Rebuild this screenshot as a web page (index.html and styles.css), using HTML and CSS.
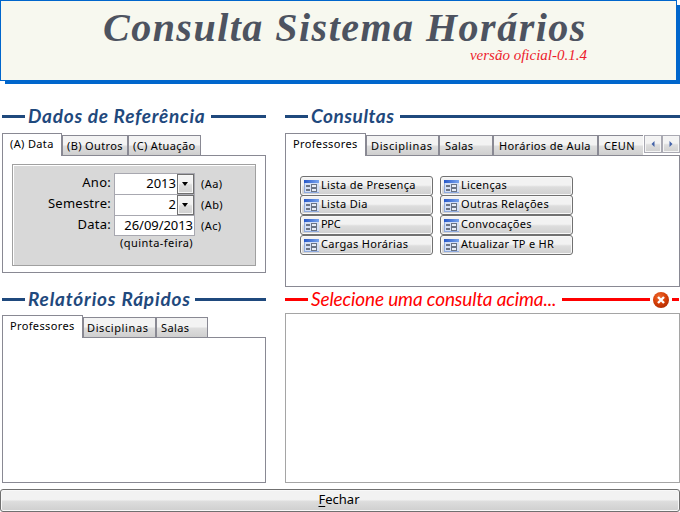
FILE: index.html
```html
<!DOCTYPE html>
<html lang="pt-BR">
<head>
<meta charset="utf-8">
<title>Consulta Sistema Horários</title>
<link rel="stylesheet" href="styles.css">
</head>
<body>
<svg width="0" height="0" class="defs" aria-hidden="true">
  <defs>
    <linearGradient id="bar" x1="0" x2="1"><stop offset="0" stop-color="#2858c8"/><stop offset="1" stop-color="#78a4ee"/></linearGradient>
    <radialGradient id="ball" cx=".4" cy=".3" r=".8"><stop offset="0" stop-color="#ee6a30"/><stop offset=".5" stop-color="#d84008"/><stop offset="1" stop-color="#a82800"/></radialGradient>
    <symbol id="form" viewBox="0 0 15 13">
      <path fill="#d3dff5" d="M0 0h15v13H0z"/>
      <path fill="url(#bar)" d="M0 0h15v3H0z"/>
      <path fill="#8fabdf" d="M0 3h1v10H0zM1 12h14v1H1z"/>
      <path fill="#6b7484" d="M2 5h4v2H2zM2 9h4v2H2zM7 4h6v4H7zM7 8h6v4H7z"/>
      <path fill="#e8edf6" d="M8 5h4v2H8zM8 9h4v2H8z"/>
    </symbol>
  </defs>
</svg>
<header class="banner">
  <div class="banner-box">
    <h1>Consulta Sistema Horários</h1>
    <p>versão oficial-0.1.4</p>
  </div>
</header>
<main>
  <section class="reference">
    <h2 class="rule"><span class="t-dados">Dados de Referência</span></h2>
    <nav class="tabs">
      <span class="tab active w60">(A) Data</span><span class="tab w66">(B) Outros</span><span class="tab w73">(C) Atuação</span>
    </nav>
    <div class="page">
      <form class="bevel">
        <label>Ano:</label><div class="field">2013<i></i></div><small>(Aa)</small>
        <label>Semestre:</label><div class="field">2<i></i></div><small>(Ab)</small>
        <label>Data:</label><div class="field date">26/09/2013</div><small>(Ac)</small>
        <small class="weekday">(quinta-feira)</small>
      </form>
    </div>
  </section>
  <section class="queries">
    <h2 class="rule"><span class="t-cons">Consultas</span></h2>
    <nav class="tabs">
      <span class="tab active w81">Professores</span><span class="tab w73">Disciplinas</span><span class="tab w54">Salas</span><span class="tab w105">Horários de Aula</span><span class="tab w45">CEUN</span>
      <span class="spin"><b><svg viewBox="0 0 4 6"><path d="M3.5 0v6L.5 3z"/></svg></b><b><svg viewBox="0 0 4 6"><path d="M.5 0v6l3-3z"/></svg></b></span>
    </nav>
    <div class="page buttons">
      <button><svg><use href="#form"/></svg><span>Lista de Presença</span></button>
      <button><svg><use href="#form"/></svg><span>Licenças</span></button>
      <button><svg><use href="#form"/></svg><span>Lista Dia</span></button>
      <button><svg><use href="#form"/></svg><span>Outras Relações</span></button>
      <button><svg><use href="#form"/></svg><span class="tight">PPC</span></button>
      <button><svg><use href="#form"/></svg><span>Convocações</span></button>
      <button><svg><use href="#form"/></svg><span>Cargas Horárias</span></button>
      <button><svg><use href="#form"/></svg><span>Atualizar TP e HR</span></button>
    </div>
  </section>
  <section class="reports">
    <h2 class="rule"><span class="t-rel">Relatórios Rápidos</span></h2>
    <nav class="tabs">
      <span class="tab active w81">Professores</span><span class="tab w73">Disciplinas</span><span class="tab w52">Salas</span>
    </nav>
    <div class="page"></div>
  </section>
  <section class="result">
    <h2 class="rule red"><span class="t-sel">Selecione uma consulta acima...</span>
      <svg class="close" viewBox="0 0 16 16"><circle cx="8" cy="8" r="8" fill="url(#ball)"/><path d="M5 5l6 6M11 5l-6 6" stroke="#fff" stroke-width="2.4"/></svg>
    </h2>
    <div class="view"></div>
  </section>
</main>
<footer><button class="exit"><span><u>F</u>echar</span></button></footer>
</body>
</html>
```
FILE: styles.css
```css
* { box-sizing: border-box; }
body { margin: 0; width: 680px; height: 512px; overflow: hidden; background: #fff; color: #000; font: 11px/16px "Noto Sans", sans-serif; }
.defs { position: absolute; }
h1, h2, p { margin: 0; }

.banner { height: 84px; background: linear-gradient(#06c, #06c) 5px 5px no-repeat; }
.banner-box { width: 677px; height: 81px; border: 1px solid #06c; background: #f7f8ef; }
h1 { padding: 9px 0 0 102px; height: 46px; font: italic bold 40px/36px "Liberation Serif", serif; letter-spacing: 1.48px; color: #4d5360; white-space: nowrap; }
.banner p { padding-right: 89px; text-align: right; font: italic 15px/17px "Liberation Serif", serif; color: #ed1c2c; }

main { display: grid; grid-template-columns: 264px 395px; column-gap: 19px; padding-left: 2px; margin-top: 22px; grid-template-rows: 182px 195px; }
section { display: flex; flex-direction: column; min-width: 0; }
.reference { height: 167px; }
.queries { height: 181px; }
.reports, .result { height: 195px; }

.rule { display: flex; align-items: center; height: 21px; color: #1f497d; font: italic bold 19px/21px Lato, sans-serif; white-space: nowrap; }
.rule span { position: relative; top: -1px; }
.rule::before, .rule::after { content: ""; height: 3px; background: currentColor; flex: none; }
.rule::before { width: 23px; margin-right: 3px; }
.rule::after { flex: 1; margin-left: 6px; }
.reports .rule, .result .rule { height: 23px; margin-bottom: -2px; }
.t-dados { width: 177px; letter-spacing: .74px; }
.t-cons { width: 83px; letter-spacing: .55px; }
.t-rel { width: 162px; margin-right: -1px; letter-spacing: .82px; }
.red { color: #f00; font-weight: normal; background: linear-gradient(#f00, #f00) 277px 10px / 88px 3px no-repeat; }
.t-sel { width: 245px; letter-spacing: -.13px; }
.red::after { flex: none; width: 7px; margin-left: 3px; }
.close { width: 16px; height: 16px; flex: none; margin-left: 97px; }

.tabs { display: flex; align-items: flex-end; height: 23px; margin-top: 6px; margin-bottom: -1px; position: relative; white-space: nowrap; }
.tab { height: 21px; border: 1px solid #898993; padding: 2px 0 0 4px; background: linear-gradient(#f3f3f3 0 45%, #ddd 55%, #cfcfcf); letter-spacing: .36px; flex: none; }
.tab.active { height: 23px; border-bottom: 0; background: #fff; padding: 2px 0 0 7px; }
.w45 { width: 45px; border-right: 0; } .w52 { width: 52px; } .w54 { width: 54px; }
.w60 { width: 60px; } .w66 { width: 66px; } .w73 { width: 73px; } .w81 { width: 81px; } .w105 { width: 105px; }
.queries .tab:not(.active) { padding-left: 5px; }
.queries .w73.w73:not(.active) { padding-left: 4px; letter-spacing: .6px; }
.reports .w73 { letter-spacing: .6px; padding-left: 3px; }
.spin { display: flex; margin: 0 0 3px 1px; }
.spin b { width: 18px; height: 18px; border: 1px solid #a9a9b2; background: linear-gradient(#f3f3f3 0 45%, #ddd 55%, #d0d0d0); box-shadow: inset 0 0 0 1px #f5f5f5; display: grid; place-items: center; }
.spin svg { width: 4px; height: 6px; fill: #4362a8; }
.page { flex: 1; border: 1px solid #898993; }

.bevel { width: 244px; height: 102px; margin: 8px 0 0 9px; border: 1px solid #a0a0a0; box-shadow: inset 1px 1px #fff; background: #d8d8d8; padding: 8px 0 0; display: grid; grid-template-columns: 101px 81px 60px; grid-template-rows: 21px 21px 21px 16px; }
.bevel label { text-align: right; padding-right: 3px; font-size: 13px; line-height: 19px; letter-spacing: .25px; }
.field { position: relative; border: 1px solid #a8a8b0; border-bottom-width: 0; background: #fff; font-size: 13px; line-height: 19px; text-align: right; padding-right: 18px; }
.date { border-bottom-width: 1px; padding-right: 1px; letter-spacing: -.05px; }
.field i { position: absolute; top: 0; right: 0; width: 17px; height: 20px; border: 1px solid #707070; background: linear-gradient(#f3f3f3 0 45%, #ddd 55%, #d0d0d0); box-shadow: inset 0 0 0 1px #f7f7f7; }
.field i::after { content: ""; position: absolute; left: 4px; top: 7px; border: solid transparent; border-width: 4px 3.5px 0; border-top-color: #000; }
.bevel small { font-size: 11px; line-height: 21px; padding-left: 6px; letter-spacing: .4px; }
.bevel .weekday { grid-column: 2; line-height: 14px; white-space: nowrap; letter-spacing: .45px; }

.buttons { display: grid; grid-template-columns: 133px 133px; grid-template-rows: 19px 20px 20px 20px; column-gap: 7px; padding: 20px 0 0 14px; }
button { display: flex; align-items: center; height: 20px; border: 1px solid #707070; border-radius: 3px; background: linear-gradient(#f2f2f2 0 45%, #ddd 55%, #cfcfcf); box-shadow: inset 0 0 0 1px #f8f8f8; padding: 0 0 0 3px; color: #000; font: 11px/16px "Noto Sans", sans-serif; letter-spacing: .3px; white-space: nowrap; }
.buttons span { padding-bottom: 2px; }
button svg { width: 15px; height: 13px; margin-right: 2px; flex: none; }
.tight { letter-spacing: -.3px; }
.view { flex: 1; margin-top: 4px; border: 1px solid #a5a5a5; }

footer { margin-top: 6px; }
.exit { width: 100%; height: 23px; justify-content: center; font-size: 13px; padding: 0 2px 3px 0; letter-spacing: 0; }
u { text-underline-offset: 2px; }
```
